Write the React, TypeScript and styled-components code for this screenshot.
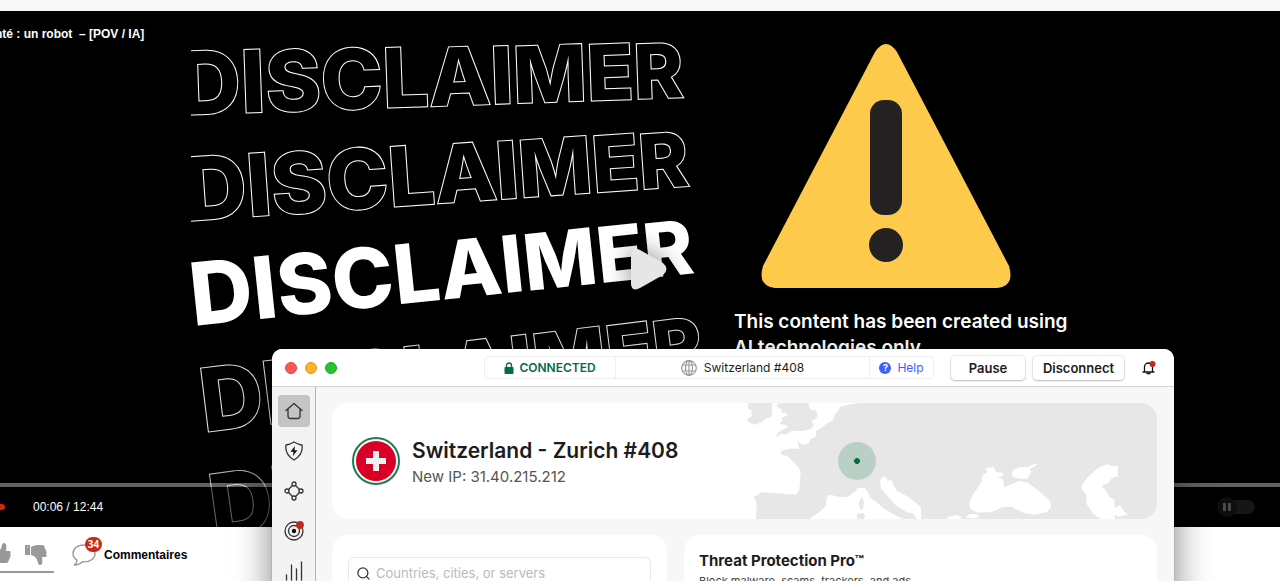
import React from "react";
import styled, { createGlobalStyle } from "styled-components";
import { Search } from "lucide-react";

const ui = `Inter, "Liberation Sans", sans-serif`;
const arial = `"Liberation Sans", Arial, sans-serif`;

const Global = createGlobalStyle`
  * { box-sizing: border-box; }
  body { margin: 0; background: #fff; font-family: ${arial}; }
  button { font: inherit; color: inherit; background: none; border: 0; padding: 0; cursor: pointer; }
  h1, h2, p { margin: 0; }
  svg { display: block; flex: none; }
`;

const Page = styled.div`
  position: relative;
  display: flex;
  flex-direction: column;
  height: 100vh;
  overflow: hidden;
`;
const TopStrip = styled.div`
  flex: none;
  height: 11px;
  background: #f7f8f8;
`;

/* Video player */
const Player = styled.section`
  position: relative;
  flex: 1;
  display: flex;
  flex-direction: column;
  min-height: 0;
  background: #000;
  color: #fff;
`;
const VideoFrame = styled.div`
  position: absolute;
  inset: 0;
  display: grid;
  grid-template-columns: 1fr 355px;
  max-width: 898px;
  margin: 0 auto;
  overflow: hidden;
`;
const WordArt = styled.svg`
  width: 100%;
  height: 516px;
  font-family: Inter, sans-serif;
  font-weight: 800;
`;
const Notice = styled.div`
  padding-top: 32px;
`;
const WarningSign = styled.svg`
  width: 250px;
  height: 246px;
  margin-left: 27px;
`;
const NoticeText = styled.p`
  margin-top: 20px;
  font: 600 19px/26px Inter, sans-serif;
  white-space: nowrap;
`;
const PlayerHead = styled.header`
  position: relative;
  flex: 1;
  overflow: hidden;
`;
const VideoTitle = styled.h1`
  margin: 15px 0 0 -5px;
  font: bold 12px/16px ${arial};
  white-space: pre;
`;
const PlayButton = styled.button`
  position: absolute;
  inset: 0;
  width: 60px;
  height: 60px;
  margin: auto;
  filter: drop-shadow(0 0 12px rgba(0, 0, 0, 0.5));
`;
const Progress = styled.div`
  position: relative;
  height: 4px;
  background: rgba(255, 255, 255, 0.38);
`;
const Controls = styled.div`
  position: relative;
  display: flex;
  align-items: center;
  height: 40px;
  padding-right: 25px;
  background: rgba(0, 0, 0, 0.45);
`;
const Volume = styled.span`
  width: 5px;
  height: 6px;
  border-radius: 0 3px 3px 0;
  background: #d9230f;
`;
const Time = styled.span`
  flex: 1;
  padding-left: 28px;
  font: 12px/16px ${arial};
`;
const Toggle = styled.button`
  display: flex;
  align-items: center;
  width: 38px;
  height: 14px;
  border-radius: 7px;
  background: #161616;
`;
const Knob = styled.span`
  display: flex;
  align-items: center;
  justify-content: center;
  gap: 2px;
  width: 20px;
  height: 20px;
  border-radius: 50%;
  background: #0d0d0d;
`;
const Bar = styled.i`
  width: 3px;
  height: 8px;
  background: #4a4a4a;
`;

/* Reactions below the player */
const Reactions = styled.footer`
  display: flex;
  flex: none;
  height: 54px;
  color: #000;
`;
const Votes = styled.div`
  display: flex;
  gap: 14px;
  width: 54px;
  height: 46px;
  padding-top: 16px;
  border-bottom: 2px solid #999;
`;
const VoteButton = styled.button`
  display: flex;
  justify-content: flex-end;
  width: 22px;
  height: 23px;
  &:first-child { width: 11px; overflow: hidden; }
`;
const Comments = styled.a`
  display: flex;
  align-items: center;
  gap: 8px;
  height: 56px;
  margin-left: 18px;
  color: #000;
  font: bold 12px/16px ${arial};
  text-decoration: none;
`;
const BubbleBox = styled.span`
  position: relative;
  width: 24px;
  height: 22px;
`;
const Count = styled.span`
  position: absolute;
  top: -7px;
  left: 13px;
  width: 17px;
  height: 15px;
  border-radius: 8px;
  background: #ca2a10;
  color: #fff;
  font: 700 10px/15px "Open Sans", sans-serif;
  text-align: center;
`;

/* VPN window floating over the page */
const Window = styled.main`
  position: absolute;
  top: 349px;
  left: 272px;
  right: 106px;
  border-radius: 10px;
  overflow: hidden;
  background: #f7f7f7;
  color: #1c1c1e;
  font-family: ${ui};
  box-shadow: 0 16px 36px rgba(0, 0, 0, 0.5), 0 0 1px rgba(0, 0, 0, 0.6);
`;
const TitleBar = styled.header`
  display: flex;
  align-items: center;
  height: 38px;
  padding: 0 18px 0 13px;
  border-bottom: 1px solid #d4d4d4;
  background: #fff;
`;
const Lights = styled.div`
  display: flex;
  gap: 8px;
  flex: 1;
`;
const Light = styled.button<{ $fill: string; $edge: string }>`
  width: 12px;
  height: 12px;
  border: 1px solid ${(p) => p.$edge};
  border-radius: 50%;
  background: ${(p) => p.$fill};
`;
const Status = styled.div`
  display: flex;
  width: 450px;
  height: 23px;
  margin-right: 17px;
  border: 1px solid #eee;
  border-radius: 4px;
  font-size: 12px;
  line-height: 21px;
`;
const Segment = styled.div<{ $width?: number; $strong?: boolean }>`
  display: flex;
  align-items: center;
  justify-content: center;
  gap: ${(p) => (p.$width ? 5 : 7)}px;
  ${(p) => (p.$width ? `width: ${p.$width}px;` : "flex: 1;")}
  ${(p) => (p.$strong ? "color: #046c43; font-weight: 600;" : "")}
  & + & { border-left: 1px solid #eee; }
`;
const HelpLink = styled.a`
  display: flex;
  align-items: center;
  gap: 6px;
  color: #3e5fff;
  text-decoration: none;
`;
const HelpMark = styled.span`
  width: 12px;
  height: 12px;
  border-radius: 50%;
  background: #3e5fff;
  color: #fff;
  font-size: 9px;
  font-weight: 700;
  line-height: 12px;
  text-align: center;
`;
const Action = styled.button<{ $width: number }>`
  width: ${(p) => p.$width}px;
  height: 24px;
  margin-right: 8px;
  border-radius: 4px;
  background: #fff;
  box-shadow: 0 0 1px 1px rgba(0, 0, 0, 0.07), 0 1px 2px rgba(0, 0, 0, 0.22);
  font-size: 13px;
  font-weight: 600;
`;
const BellButton = styled.button`
  margin-left: 10px;
`;
const Body = styled.div`
  display: flex;
`;
const Sidebar = styled.nav`
  display: flex;
  flex-direction: column;
  gap: 8px;
  width: 44px;
  padding: 8px 6px;
  border-right: 1px solid #b4b4b4;
  background: #f3f3f3;
`;
const NavButton = styled.button<{ $active?: boolean }>`
  display: flex;
  align-items: center;
  justify-content: center;
  width: 32px;
  height: 32px;
  border-radius: 4px;
  background: ${(p) => (p.$active ? "#c4c4c4" : "none")};
`;
const Content = styled.div`
  flex: 1;
  display: grid;
  grid-template-columns: 335px 1fr;
  gap: 16px 17px;
  padding: 16px 17px 16px 16px;
`;
const Card = styled.section`
  overflow: hidden;
  min-height: 116px;
  border-radius: 16px;
  background: #fff;
`;
const ServerCard = styled(Card)`
  grid-column: 1 / -1;
  display: flex;
  align-items: center;
  gap: 12px;
  padding-left: 20px;
`;
const FlagRing = styled.span`
  width: 48px;
  height: 48px;
  border: 2px solid #1b7d50;
  border-radius: 50%;
  padding: 2px;
`;
const ServerText = styled.div`
  flex: 1;
  padding-top: 3px;
  white-space: nowrap;
`;
const ServerName = styled.h2`
  font-size: 21px;
  font-weight: 600;
  line-height: 28px;
`;
const ServerIp = styled.p`
  color: #555;
  font-size: 15px;
  line-height: 24px;
`;
const MapArt = styled.svg`
  width: 417px;
  height: 116px;
`;
const SearchCard = styled(Card)`
  padding: 22px 16px;
`;
const SearchBox = styled.label`
  display: flex;
  align-items: center;
  gap: 5px;
  height: 32px;
  padding-left: 7px;
  border: 1px solid #e8e8e8;
  border-radius: 6px;
`;
const SearchInput = styled.input`
  flex: 1;
  border: 0;
  outline: 0;
  padding: 0;
  background: none;
  font: 13px/20px ${ui};
  &::placeholder { color: #bababa; opacity: 1; }
`;
const ThreatCard = styled(Card)`
  padding: 16px 15px;
`;
const ThreatTitle = styled.h2`
  font-size: 15px;
  font-weight: 700;
  line-height: 20px;
`;
const ThreatText = styled.p`
  color: #444;
  font-size: 11px;
  line-height: 20px;
`;

const letters = "DISCLAIMER".split("");
const rows = [
  { x: 179, y: 115, angle: -2, solid: false, opacity: 1 },
  { x: 186, y: 221, angle: -4, solid: false, opacity: 1 },
  { x: 193, y: 326, angle: -6, solid: true, opacity: 1 },
  { x: 204, y: 432, angle: -7, solid: false, opacity: 0.9 },
  { x: 214, y: 538, angle: -8, solid: false, opacity: 0.7 },
];

const Disclaimer = () => (
  <WordArt viewBox="191 11 543 516">
    {rows.map((r) => (
      <text
        key={r.y}
        transform={`translate(${r.x} ${r.y}) rotate(${r.angle})`}
        fill={r.solid ? "#fff" : "#000"}
        stroke={r.solid ? "none" : "#fff"}
        strokeWidth="2"
        paintOrder="stroke"
        opacity={r.opacity}
      >
        {letters.map((c, i) => (
          <tspan key={i} fontSize={87 - Math.round(i * 1.3)}>{c}</tspan>
        ))}
      </text>
    ))}
  </WordArt>
);

const Thumb = ({ down = false }: { down?: boolean }) => (
  <svg width="22" height="22" viewBox="0 0 22 22" fill="#999">
    <g transform={down ? "translate(0 22) scale(1 -1)" : undefined}>
      <path d="M0 10h5v10H0z" />
      <path d="M6 10c4-1 6-3 7-8 0-1 1-2 2-2 2 0 3 2 2 8h3c2 0 2 2 1 3 1 1 1 2 0 3 0 1 0 2-1 2 0 2-1 4-3 4h-5c-2 0-4-1-6-2z" />
      <path d="M2 18h1" stroke="#fff" />
    </g>
  </svg>
);

const line = { fill: "none", stroke: "#333", strokeWidth: 1.3, strokeLinecap: "round" as const, strokeLinejoin: "round" as const };

const EuropeMap = () => (
  <MapArt viewBox="0 9 1251 348">
    <g fill="#e7e7e7">
      <path d="M25 9H97L95 50 74 58 66 66 45 74 24 66 22 58 38 46 32 40 36 32 24 26Z" />
      <path d="M113 9H205L207 20 214 30 229 32 233 44 228 56 214 64 222 74 214 86 184 93 154 92 140 104 126 101 108 112 112 100 130 88 146 82 134 74 118 72 128 60 124 52 142 48 136 36 124 40 126 28 110 20Z" />
      <path d="M360 9 326 14 300 20 294 32 284 44 280 60 262 70 240 86 228 92V110L212 116 204 132 188 134 172 122 178 146 150 146 122 153 124 164 142 168 156 182 174 200 182 216 178 270 168 284 116 280 60 277 56 286 42 288 50 310 48 357H1251V9Z" />
    </g>
    <g fill="#fff">
      <path d="M208 357 238 336 258 318 260 292 270 284 300 291 322 290 345 276 352 264 375 264 385 278 390 293 412 308 430 325 465 346 490 357Z" />
      <path d="M420 246 424 234 436 229 442 242 454 240 460 254 470 272 500 288 522 304 543 322 544 357 530 357 522 342 500 336 470 318 440 285 424 266Z" />
      <path d="M618 357 626 350 648 345 662 350 664 357Z" />
      <path d="M690 300 702 280 724 246 728 226 740 218 738 204 762 202 768 216 788 218 790 226 776 232 790 240 792 262 812 254 840 242 866 250 900 276 930 302 934 322 920 336 884 344 850 338 814 320 788 322 756 336 714 338 692 328 688 314Z" />
      <path d="M814 222 820 210 840 202 866 200 888 190 890 196 870 206 874 216 862 236 838 236 820 232Z" />
      <path d="M1024 258 1044 230 1074 204 1102 193 1116 198 1134 198V228L1116 234 1104 250 1084 258 1096 270 1108 290 1124 300V324L1140 316 1152 334 1162 344 1136 350 1124 344 1126 357H1082L1060 342 1040 312 1038 282 1026 270Z" />
      <path d="M676 352 690 343 710 342 718 350 700 356Z" />
    </g>
    <g fill="#e7e7e7">
      <path d="M360 300 368 290 372 310 368 330 360 326 356 312ZM350 342 370 338 376 350 370 357H352Z" />
    </g>
    <circle cx="351" cy="183" r="57" fill="#bad0c7" />
    <path d="M348 174h6l6 6v6l-6 6h-6l-6-6v-6Z" fill="#046c43" />
  </MapArt>
);

export default function App() {
  return (
    <>
      <Global />
      <Page>
        <TopStrip />
        <Player>
          <VideoFrame>
            <Disclaimer />
            <Notice>
              <WarningSign viewBox="0 0 250 246">
                <path d="M114 9Q125-7 136 9L248 223Q254 243 236 245H14Q-4 243 2 223Z" fill="#fdca4b" />
                <rect x="109" y="57" width="32" height="115" rx="14" fill="#242122" />
                <circle cx="125" cy="202" r="17" fill="#242122" />
              </WarningSign>
              <NoticeText>
                This content has been created using
                <br />
                AI technologies only.
              </NoticeText>
            </Notice>
          </VideoFrame>
          <PlayerHead>
            <VideoTitle>{"nté : un robot  – [POV / IA]"}</VideoTitle>
          </PlayerHead>
          <PlayButton aria-label="Lecture">
            <svg width="60" height="60" viewBox="0 0 60 60">
              <path d="M21 17C21 10 24 8 30 11L53 24Q60 30 53 36L30 49C24 52 21 50 21 44Z" fill="#e6e6e6" />
            </svg>
          </PlayButton>
          <Progress />
          <Controls>
            <Volume />
            <Time>00:06 / 12:44</Time>
            <Toggle aria-label="Lecture automatique">
              <Knob><Bar /><Bar /></Knob>
            </Toggle>
          </Controls>
        </Player>
        <Reactions>
          <Votes>
            <VoteButton aria-label="J'aime"><Thumb /></VoteButton>
            <VoteButton aria-label="Je n'aime pas"><Thumb down /></VoteButton>
          </Votes>
          <Comments href="#comments">
            <BubbleBox>
              <svg width="24" height="22" viewBox="0 0 24 22" fill="#fff" stroke="#999" strokeWidth="1.4">
                <path d="M12 1C5 1 1 5 1 9.500C1 12 2.500 14.500 5 16C5 18 4 20 2 21C6 21 9 19.500 10.500 17.800C18 18.500 23 14.500 23 9.500C23 5 19 1 12 1Z" />
              </svg>
              <Count>34</Count>
            </BubbleBox>
            Commentaires
          </Comments>
        </Reactions>

        <Window>
          <TitleBar>
            <Lights>
              <Light $fill="#ff5651" $edge="#e2443f" aria-label="Close" />
              <Light $fill="#fdb32a" $edge="#df9a20" aria-label="Minimize" />
              <Light $fill="#28c231" $edge="#1ea826" aria-label="Zoom" />
            </Lights>
            <Status>
              <Segment $width={130} $strong>
                <svg width="10" height="12" viewBox="0 0 10 12">
                  <path d="M2.500 6V3.500a2.500 2.500 0 0 1 5 0V6" fill="none" stroke="#046c43" strokeWidth="1.400" />
                  <rect x="0.500" y="5" width="9" height="7" rx="1" fill="#046c43" />
                </svg>
                CONNECTED
              </Segment>
              <Segment>
                <svg width="16" height="16" viewBox="0 0 16 16" fill="none" stroke="#999" strokeWidth="1.200">
                  <circle cx="8" cy="8" r="7.300" />
                  <ellipse cx="8" cy="8" rx="3.500" ry="7.300" />
                  <path d="M8 1v14M1.500 5h13M1.500 11h13" />
                </svg>
                Switzerland #408
              </Segment>
              <Segment $width={64}>
                <HelpLink href="#help"><HelpMark>?</HelpMark>Help</HelpLink>
              </Segment>
            </Status>
            <Action $width={74}>Pause</Action>
            <Action $width={91}>Disconnect</Action>
            <BellButton aria-label="Notifications">
              <svg width="14" height="14" viewBox="0 0 14 14">
                <path d="M2.500 10V6a4 4 0 0 1 8 0v4M1 11h11" {...line} stroke="#111" />
                <path d="M5 12.500h3" {...line} stroke="#111" />
                <circle cx="10.500" cy="3" r="3" fill="#c4261d" />
              </svg>
            </BellButton>
          </TitleBar>
          <Body>
            <Sidebar>
              <NavButton $active aria-label="Home">
                <svg width="20" height="20" viewBox="0 0 20 20" {...line}>
                  <path d="M2 9.500 10 2.500l8 7M4 8v7q0 2.500 2.500 2.500h7Q16 17.500 16 15V8" />
                </svg>
              </NavButton>
              <NavButton aria-label="Threat protection">
                <svg width="20" height="20" viewBox="0 0 20 20" {...line}>
                  <path d="M10 1Q14 3.500 18 4Q19.500 13 10 19Q.5 13 2 4Q6 3.500 10 1Z" />
                  <path d="M11 5 6.500 10.800h3L8.800 15l4.700-5.800h-3Z" fill="#111" stroke="none" />
                </svg>
              </NavButton>
              <NavButton aria-label="Meshnet">
                <svg width="20" height="20" viewBox="0 0 20 20" {...line}>
                  <circle cx="10" cy="3" r="2" /><circle cx="3" cy="10" r="2" /><circle cx="17" cy="10" r="2" /><circle cx="10" cy="17" r="2" />
                  <path d="M4.500 8.500 8 5M12 5l3.500 3.500M4.500 11.500 8 15M12 15l3.500-3.500" />
                </svg>
              </NavButton>
              <NavButton aria-label="Dark web monitor">
                <svg width="20" height="20" viewBox="0 0 20 20" {...line}>
                  <circle cx="10" cy="10" r="9" /><circle cx="10" cy="10" r="5.500" />
                  <circle cx="10" cy="10" r="2.200" fill="#111" stroke="none" />
                  <circle cx="16" cy="4" r="3.900" fill="#c4261d" stroke="none" />
                </svg>
              </NavButton>
              <NavButton aria-label="Statistics">
                <svg width="20" height="20" viewBox="0 0 20 20" {...line}>
                  <path d="M2.500 14v5M7.500 4v15M12.500 8v11M17.500 1v18" />
                </svg>
              </NavButton>
            </Sidebar>
            <Content>
              <ServerCard>
                <FlagRing>
                  <svg width="40" height="40" viewBox="0 0 40 40">
                    <circle cx="20" cy="20" r="20" fill="#d80027" />
                    <path d="M17 10h6v7h7v6h-7v7h-6v-7h-7v-6h7z" fill="#f0f0f0" />
                  </svg>
                </FlagRing>
                <ServerText>
                  <ServerName>Switzerland - Zurich #408</ServerName>
                  <ServerIp>New IP: 31.40.215.212</ServerIp>
                </ServerText>
                <EuropeMap />
              </ServerCard>
              <SearchCard>
                <SearchBox>
                  <Search size={15} color="#333" />
                  <SearchInput placeholder="Countries, cities, or servers" aria-label="Search servers" />
                </SearchBox>
              </SearchCard>
              <ThreatCard>
                <ThreatTitle>Threat Protection Pro™</ThreatTitle>
                <ThreatText>Block malware, scams, trackers, and ads.</ThreatText>
              </ThreatCard>
            </Content>
          </Body>
        </Window>
      </Page>
    </>
  );
}
